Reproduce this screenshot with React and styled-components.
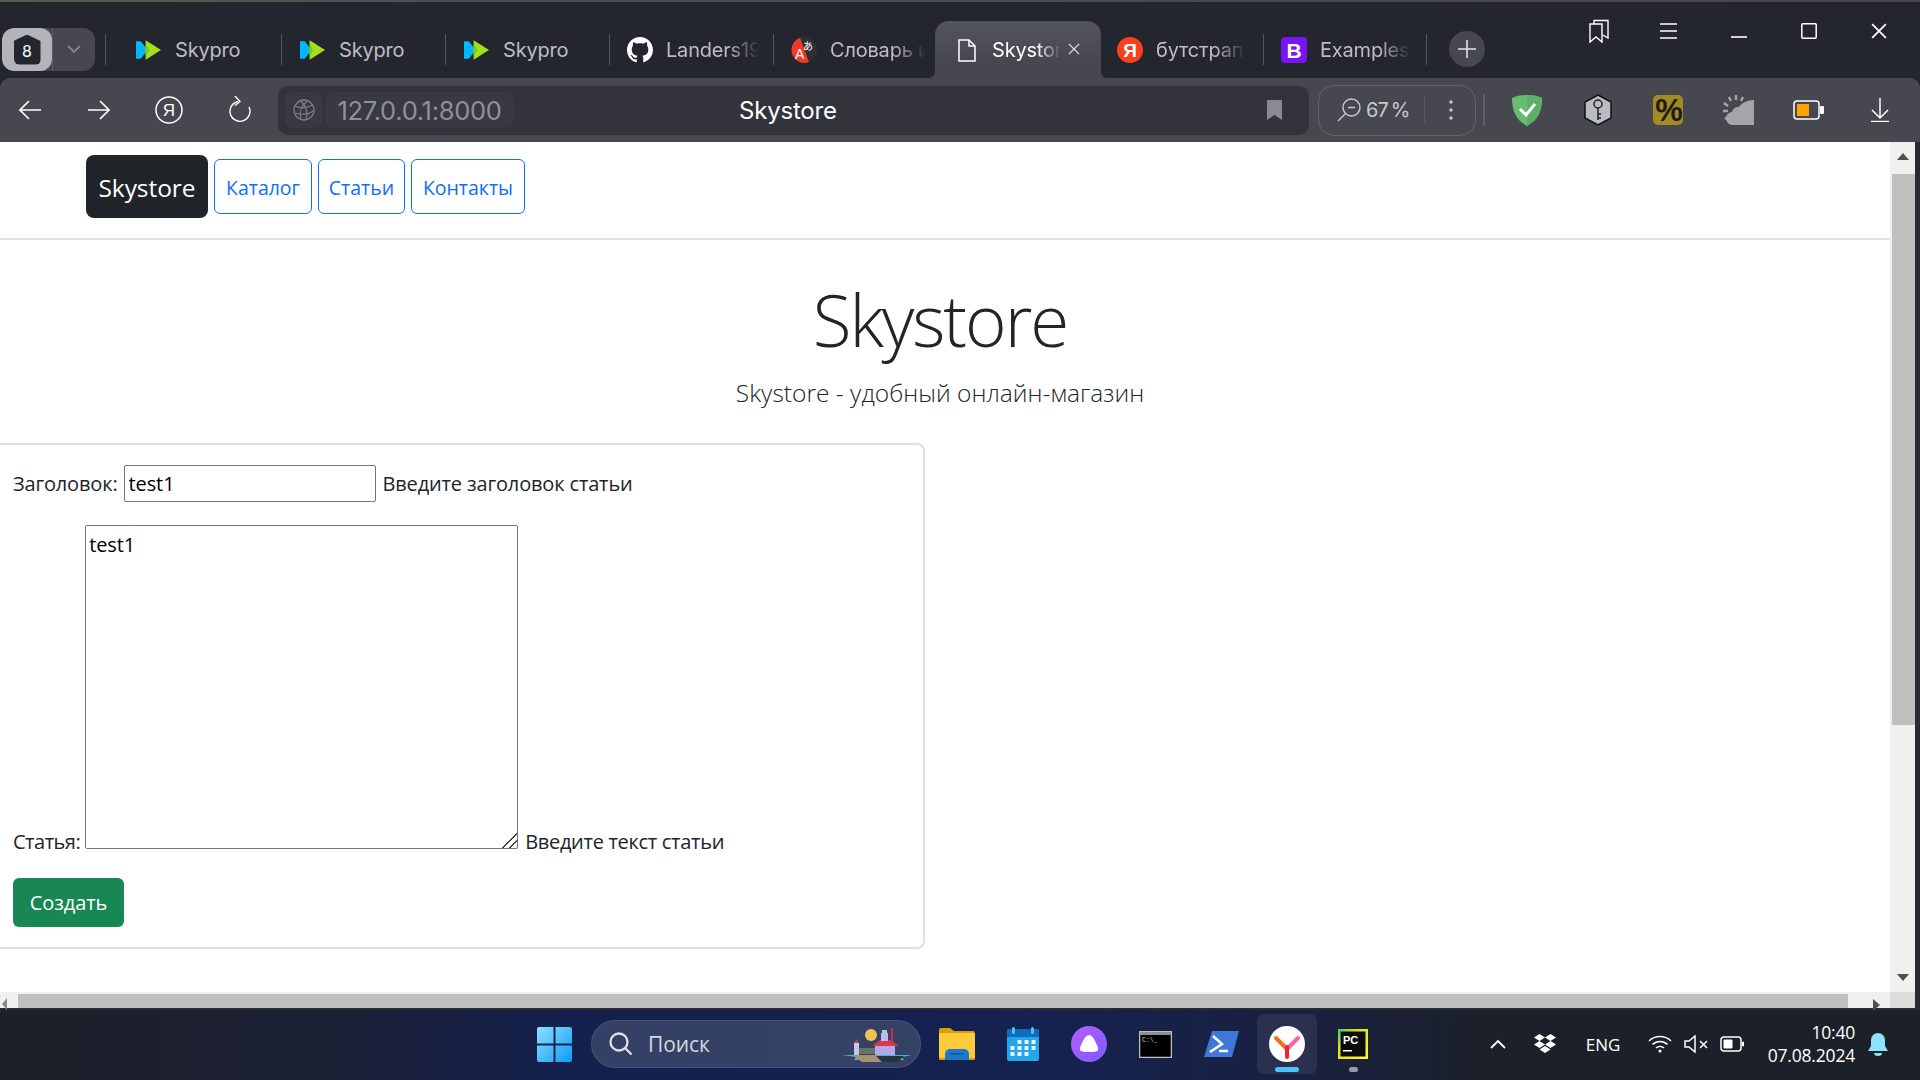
import React from 'react';
import styled, { createGlobalStyle } from 'styled-components';
import { BsGithub } from 'react-icons/bs';

const Global = createGlobalStyle`
  html, body { margin: 0; padding: 0; background: #24262f; overflow: hidden; }
  * { box-sizing: border-box; }
`;

const UI = `Inter, "Noto Sans", sans-serif`;
const PAGE = `"Open Sans", "Noto Sans", sans-serif`;

const Win = styled.div`
  width: 1920px; height: 1080px; display: flex; flex-direction: column; overflow: hidden;
  background: #24262f; font-family: ${UI};
`;
const TopStrip = styled.div`
  height: 2px; flex: none; background: linear-gradient(90deg, #565c52 0%, #4a4c4c 30%, #454549 100%);
`;
const TabBar = styled.div`
  height: 76px; flex: none; display: flex; align-items: flex-end; background: #24262f; padding-left: 2px;
`;
const Switcher = styled.div`
  width: 93px; height: 43px; margin-bottom: 7px; flex: none; display: flex; border-radius: 12px; background: #474750; overflow: hidden;
`;
const SwitchCount = styled.div`
  width: 50px; background: #b4b4b8; border-radius: 12px; display: flex; align-items: center; justify-content: center; color: #fff;
  font-size: 16px;
`;
const CountShape = styled.div`
  width: 27px; height: 30px; background: #24262f; border-radius: 3px 3px 6px 6px; display: flex; align-items: center; justify-content: center;
  clip-path: polygon(50% 0, 100% 22%, 100% 100%, 0 100%, 0 22%); padding-top: 2px;
`;
const SwitchArrow = styled.div`
  flex: 1; display: flex; align-items: center; justify-content: center; border-left: 1px solid #5d5d66;
`;
const Sep = styled.div`
  width: 1px; height: 31px; background: #55565e; flex: none; margin-bottom: 13px;
`;
const Spacer = styled.div`
  width: ${p => p.$w}px; flex: none;
`;
const Tab = styled.div`
  position: relative; width: ${p => p.$w}px; flex: none; display: flex; align-items: center; gap: ${p => p.$gap || 13}px;
  padding-left: ${p => p.$pad}px; padding-right: ${p => p.$pr || 22}px; height: 57px; padding-top: 1px;
  font-size: 20px; color: #bdbdc2;
  ${p => p.$sep && `
    &::after { content: ''; position: absolute; right: 0; top: 13px; height: 31px; width: 1px; background: #55565e; }
  `}
  ${p => p.$active && `
    color: #fff;
    background: linear-gradient(180deg, #54545e 0%, #474750 70%);
    border-radius: 14px 14px 0 0;
    &::before { content: ''; position: absolute; left: -7px; bottom: 0; width: 7px; height: 7px;
      background: radial-gradient(circle at 0 0, transparent 7px, #474750 7.5px); }
    &::after { content: ''; position: absolute; right: -7px; bottom: 0; width: 7px; height: 7px;
      background: radial-gradient(circle at 100% 0, transparent 7px, #474750 7.5px); }
  `}
`;
const TabIcon = styled.div`
  width: 26px; height: 26px; flex: none; display: flex; align-items: center; justify-content: center;
`;
const TabText = styled.div`
  flex: 1; min-width: 0; overflow: hidden; white-space: nowrap; letter-spacing: -0.2px;
  ${p => p.$fade && `-webkit-mask-image: linear-gradient(90deg, #000 65%, transparent 100%); mask-image: linear-gradient(90deg, #000 65%, transparent 100%);`}
`;
const TabClose = styled.div`
  position: absolute; right: 21px; top: 22px; width: 12px; height: 12px; display: flex;
`;
const PlusBtn = styled.div`
  width: 36px; height: 36px; margin-left: 22px; margin-bottom: 11px; flex: none; border-radius: 18px; background: #474750;
  display: flex; align-items: center; justify-content: center;
`;
const WinControls = styled.div`
  margin-left: auto; margin-right: 6px; height: 58px; align-self: flex-start; display: flex;
`;
const WinBtn = styled.div`
  width: 70px; display: flex; align-items: center; justify-content: center;
`;

const ToolBar = styled.div`
  height: 64px; flex: none; display: flex; align-items: center; background: #474750; border-radius: 10px 10px 0 0;
`;
const ToolSlot = styled.div`
  width: ${p => p.$w || 70}px; margin-right: ${p => p.$mr || 0}px; flex: none; display: flex; align-items: center; justify-content: center;
`;
const Address = styled.div`
  width: 1031px; height: 49px; margin-left: 4px; flex: none; background: #32333b; border-radius: 10px; display: flex; align-items: center;
  padding: 0 27px 0 7px; gap: 3px;
`;
const GlobeBox = styled.div`
  width: 37px; height: 36px; background: #383941; border-radius: 8px; display: flex; align-items: center; justify-content: center;
`;
const UrlBox = styled.div`
  width: 189px; height: 36px; background: #383941; border-radius: 8px; display: flex; align-items: center; justify-content: center;
  color: #90909a; font-size: 25.5px; letter-spacing: -0.3px; white-space: nowrap;
`;
const PageTitle = styled.div`
  margin-left: 222px; color: #fff; font-size: 24px; letter-spacing: -0.2px;
`;
const BookmarkSlot = styled.div`
  margin-left: auto; display: flex;
`;
const ZoomPill = styled.div`
  width: 158px; height: 51px; margin-left: 9px; flex: none; border: 1px solid #63636c; border-radius: 16px; display: flex; align-items: center;
  padding-left: 18px; color: #c9c9ce; font-size: 20px; position: relative;
`;
const ZoomValue = styled.span`
  margin-left: 5px; flex: none; letter-spacing: -0.9px; word-spacing: -2px; white-space: nowrap;
`;
const ZoomDivider = styled.div`
  width: 1px; height: 28px; background: #55565e; margin-left: 15px;
`;
const ZoomMore = styled.div`
  margin-left: 24px; display: flex;
`;
const ToolSep = styled.div`
  width: 2px; height: 32px; background: #60606a; margin-left: 7px; margin-right: 6px; flex: none;
`;

const PageFrame = styled.div`
  height: 868px; flex: none; background: #2a2b30; padding: 0 5px 2px 0; display: grid;
  grid-template-columns: 1fr 25px; grid-template-rows: 850px 16px;
`;
const Viewport = styled.div`
  background: #fff; overflow: hidden; font-family: ${PAGE}; color: #212529;
`;
const Nav = styled.nav`
  height: 98px; border-bottom: 2px solid #dee2e6; display: flex; align-items: center; padding: 0 0 7px 86px; gap: 6px;
`;
const Brand = styled.div`
  width: 122px; height: 63px; padding-top: 1px; background: #212529; color: #fff; border-radius: 8px; display: flex; align-items: center; justify-content: center;
  font-size: 24.5px; letter-spacing: -0.05px;
`;
const NavLink = styled.a`
  width: ${p => p.$w}px; height: 55px; padding-top: 1px; border: 1px solid #0d6efd; border-radius: 6px; color: #0d6efd; display: flex; align-items: center; justify-content: center;
  font-size: 19.5px; letter-spacing: -0.02px;
`;
const Hero = styled.header`
  width: 1880px; text-align: center; height: 203px; padding-top: 32px;
`;
const H1 = styled.h1`
  margin: 0; font-size: 71px; line-height: 96px; font-weight: 300; letter-spacing: -2.05px;
`;
const Lead = styled.p`
  margin: 8px 0 0; font-size: 24.5px; line-height: 34px; font-weight: 300; letter-spacing: 0.02px;
`;
const Card = styled.form`
  width: 933px; height: 506px; margin-left: -8px; border: 2px solid #e0e0e0; border-radius: 8px; padding: 20px 12px 0 19px;
  display: flex; flex-direction: column; font-size: 20px; letter-spacing: -0.15px;
`;
const FieldRow = styled.div`
  display: flex; align-items: ${p => p.$end ? 'flex-end' : 'center'}; margin-bottom: ${p => p.$mb}px; white-space: nowrap;
`;
const Label = styled.label`
  margin-right: ${p => p.$end ? 5 : 6}px; ${p => p.$end && 'line-height: 20px; margin-bottom: -3px; letter-spacing: -0.5px;'}
`;
const Hint = styled.span`
  margin-left: 7px; ${p => p.$end && 'line-height: 20px; margin-bottom: -3px; letter-spacing: -0.3px;'}
`;
const TextInput = styled.input`
  width: 252px; height: 37px; border: 1px solid #767676; border-radius: 2px; padding: 0 4px; font: inherit; letter-spacing: -0.1px; color: #000; outline: none;
`;
const TextArea = styled.textarea`
  display: block; width: 433px; height: 324px; border: 1px solid #767676; border-radius: 2px; padding: 5px 3px; font: inherit; letter-spacing: -0.1px; color: #000; outline: none;
  &::-webkit-resizer {
    background:
      linear-gradient(135deg, transparent 48%, #444 48%, #444 56%, transparent 56%, transparent 72%, #444 72%, #444 80%, transparent 80%);
  }
`;
const Submit = styled.button`
  width: 111px; height: 49px; background: #198754; color: #fff; border: none; border-radius: 6px; font: inherit; letter-spacing: -0.1px; padding: 0;
`;

const VScroll = styled.div`
  background: #f0f0f0; display: flex; flex-direction: column; padding-left: 2px; align-items: stretch;
`;
const VBtn = styled.div`
  height: ${p => p.$h}px; flex: none; display: flex; justify-content: center; padding-top: ${p => p.$pt}px; margin-left: -2px;
`;
const TriUp = styled.div`
  width: 0; height: 0; border-left: 6.5px solid transparent; border-right: 6.5px solid transparent; border-bottom: 7px solid #505050;
`;
const TriDown = styled.div`
  width: 0; height: 0; border-left: 6.5px solid transparent; border-right: 6.5px solid transparent; border-top: 7px solid #505050;
`;
const VThumb = styled.div`
  height: 551px; background: #c0c0c0; flex: none;
`;
const VFill = styled.div`
  flex: 1;
`;
const HScroll = styled.div`
  background: #f0f0f0; display: flex; padding-top: 2px;
`;
const HBtn = styled.div`
  width: ${p => p.$w}px; flex: none; display: flex; justify-content: ${p => p.$right ? 'flex-end' : 'flex-start'}; align-items: flex-end; padding: 0 ${p => p.$right ? 10 : 0}px 0 ${p => p.$right ? 0 : 2}px;
`;
const TriLeft = styled.div`
  width: 0; height: 0; border-top: 6px solid transparent; border-bottom: 6px solid transparent; border-right: 5px solid #8a8a8a; margin-bottom: -2px;
`;
const TriRight = styled.div`
  width: 0; height: 0; border-top: 6px solid transparent; border-bottom: 6px solid transparent; border-left: 7px solid #505050; margin-bottom: -3px;
`;
const HThumb = styled.div`
  width: 1830px; flex: none; background: #c0c0c0;
`;
const Corner = styled.div`
  background: #dcdcdc;
`;

const TaskBar = styled.div`
  height: 70px; flex: none; display: flex; align-items: center; padding: 0 0 2px 521px; color: #fff;
  background: linear-gradient(90deg, #1d2028 0%, #1b2036 18%, #14214f 30%, #15224f 55%, #1a2140 68%, #1c2029 78%, #1c2028 100%);
  font-family: ${PAGE};
`;
const AppSlot = styled.div`
  position: relative; width: 66px; height: 68px; flex: none; display: flex; align-items: center; justify-content: center;
  ${p => p.$mr && `margin-right: ${p.$mr}px;`}
`;
const HoverBox = styled.div`
  width: 60px; height: 60px; background: rgba(255,255,255,0.07); border-radius: 7px; display: flex; align-items: center; justify-content: center;
`;
const Indicator = styled.div`
  position: absolute; left: 50%; bottom: 6px; width: ${p => p.$w}px; height: 5px; margin-left: ${p => -p.$w / 2}px; border-radius: 3px; background: ${p => p.$c};
`;
const SearchPill = styled.div`
  width: 330px; height: 48px; flex: none; margin-right: 3px; border-radius: 24px; background: rgba(255,255,255,0.14); border: 1px solid rgba(255,255,255,0.1);
  display: flex; align-items: center; padding-left: 17px; font-size: 21px; color: #d5d7de; position: relative;
`;
const SearchLabel = styled.span`
  margin-left: 15px; letter-spacing: -0.1px;
`;
const Lighthouse = styled.div`
  margin-left: auto; margin-right: 8px; padding-top: 4px; display: flex;
`;
const Tray = styled.div`
  margin-left: auto; display: flex; align-items: center; padding-right: 19px; height: 68px;
`;
const TraySlot = styled.div`
  width: ${p => p.$w}px; flex: none; display: flex; align-items: center; justify-content: center; font-size: 17px;
`;
const Clock = styled.div`
  width: 100px; flex: none; text-align: right; font-size: 17.5px; line-height: 23px; letter-spacing: -0.2px; white-space: nowrap;
`;

/* ---------- icons ---------- */
const Skypro = () => (
  <svg width="27" height="20" viewBox="0 0 27 20">
    <path d="M0 1h5l7 9-7 9H0z" fill="#00b8ff" />
    <path d="M10 0l16 10-16 10z" fill="#a4e01a" />
    <path d="M10 4l4 6-4 6z" fill="#7ec81a" />
  </svg>
);
const Translate = () => (
  <svg width="26" height="26" viewBox="0 0 26 26">
    <circle cx="13" cy="13" r="13" fill="#2e2e33" />
    <path d="M9 .8A13 13 0 0 0 9 25.2 13 13 0 0 0 18 25L9 .8z" fill="#f1392a" />
    <text x="4" y="22" fontSize="14" fontFamily="Liberation Sans" fill="#fff">A</text>
    <text x="12" y="13" fontSize="10" fontFamily="Noto Sans CJK JP" fill="#fff">あ</text>
  </svg>
);
const Doc = () => (
  <svg width="18" height="23" viewBox="0 0 18 23" fill="none" stroke="#fff" strokeWidth="1.5">
    <path d="M1 1h10l6 6v15H1z" /><path d="M11 1v6h6" />
  </svg>
);
const YaTab = () => (
  <svg width="26" height="26" viewBox="0 0 26 26">
    <circle cx="13" cy="13" r="13" fill="#fc3f1d" />
    <text x="13" y="20" textAnchor="middle" fontSize="19" fontWeight="700" fontFamily="Liberation Sans" fill="#fff">Я</text>
  </svg>
);
const BootstrapIcon = () => (
  <svg width="26" height="26" viewBox="0 0 26 26">
    <rect width="26" height="26" rx="4" fill="#7a12f5" />
    <text x="13" y="20.5" textAnchor="middle" fontSize="21" fontWeight="700" fontFamily="Liberation Sans" fill="#fff">B</text>
  </svg>
);
const Cross = ({ s = 14, c = '#e6e6e8', w = 1.4 }) => (
  <svg width={s} height={s} viewBox="0 0 14 14" stroke={c} strokeWidth={w} fill="none"><path d="M1 1l12 12M13 1L1 13" /></svg>
);
const Chevron = () => (
  <svg width="14" height="9" viewBox="0 0 14 9" fill="none" stroke="#85858e" strokeWidth="1.8"><path d="M1 1l6 6 6-6" /></svg>
);
const Plus = () => (
  <svg width="18" height="18" viewBox="0 0 18 18" stroke="#e3e3e6" strokeWidth="1.6"><path d="M9 0v18M0 9h18" /></svg>
);
const Bookmarks = () => (
  <svg width="20" height="24" viewBox="0 0 20 24" fill="none" stroke="#fff" strokeWidth="1.4">
    <path d="M1 5h12v18l-6-5-6 5z" /><path d="M5 5V1.500h14V19l-5-3" />
  </svg>
);
const Burger = () => (
  <svg width="18" height="16" viewBox="0 0 18 16" stroke="#fff" strokeWidth="1.5"><path d="M0 1h17M0 8h17M0 15h17" /></svg>
);
const Minimize = () => (
  <svg width="16" height="16" viewBox="0 0 16 16" stroke="#fff" strokeWidth="1.6"><path d="M0 14h16" /></svg>
);
const Maximize = () => (
  <svg width="16" height="16" viewBox="0 0 16 16" stroke="#fff" strokeWidth="1.5" fill="none"><rect x=".8" y=".8" width="14.4" height="14.4" rx="1" /></svg>
);
const Back = () => (
  <svg width="22" height="20" viewBox="0 0 22 20" fill="none" stroke="#fff" strokeWidth="1.6"><path d="M22 10H1M10 1l-9 9 9 9" /></svg>
);
const Forward = () => (
  <svg width="22" height="20" viewBox="0 0 22 20" fill="none" stroke="#fff" strokeWidth="1.6"><path d="M0 10h21M12 1l9 9-9 9" /></svg>
);
const YaCircle = () => (
  <svg width="28" height="28" viewBox="0 0 28 28">
    <circle cx="14" cy="14" r="13" fill="none" stroke="#fff" strokeWidth="1.5" />
    <text x="14" y="20" textAnchor="middle" fontSize="17" fontFamily="Liberation Sans" fill="#fff">Я</text>
  </svg>
);
const Reload = () => (
  <svg width="24" height="28" viewBox="0 0 24 28" fill="none" stroke="#fff" strokeWidth="1.4">
    <path d="M11 5.500a10 10 0 1 0 11 5.500" /><path d="M8 0l5 5.500-5 4" />
  </svg>
);
const Globe = () => (
  <svg width="22" height="22" viewBox="0 0 22 22" fill="none" stroke="#7c7c85" strokeWidth="1.3">
    <circle cx="11" cy="11" r="10" /><path d="M2 7c6 3 12 2 18-1M2 14c6 2 13 2 18-2M14 2C8 7 6 14 8 20M8 2c5 5 7 12 5 19" />
  </svg>
);
const BookmarkFlag = () => (
  <svg width="15" height="20" viewBox="0 0 15 20"><path d="M0 1a1 1 0 0 1 1-1h13a1 1 0 0 1 1 1v19l-7.500-5L0 20z" fill="#8a8a92" /></svg>
);
const ZoomOut = () => (
  <svg width="24" height="24" viewBox="0 0 24 24" fill="none" stroke="#c9c9ce" strokeWidth="1.4">
    <circle cx="14.500" cy="9.500" r="8.500" /><path d="M8 16l-7 7M11 9.500h7" />
  </svg>
);
const Dots = () => (
  <svg width="4" height="20" viewBox="0 0 4 20" fill="#c9c9ce"><circle cx="2" cy="2" r="1.700" /><circle cx="2" cy="10" r="1.700" /><circle cx="2" cy="18" r="1.700" /></svg>
);
const Shield = () => (
  <svg width="30" height="31" viewBox="0 0 30 31">
    <path d="M15 0C9 0 4 1 0 3c0 13 4 22 15 28C26 25 30 16 30 3c-4-2-9-3-15-3z" fill="#68bc71" />
    <path d="M15 0c6 0 11 1 15 3 0 13-4 22-15 28z" fill="#5caf68" />
    <path d="M8 14l6 6 9-11" fill="none" stroke="#fff" strokeWidth="3" />
  </svg>
);
const KeyHex = () => (
  <svg width="28" height="32" viewBox="0 0 28 32">
    <path d="M14 1l13 7v16l-13 7-13-7V8z" fill="#b9bcc2" stroke="#111" strokeWidth="1.500" />
    <circle cx="14" cy="10" r="4" fill="none" stroke="#222" strokeWidth="1.500" />
    <path d="M14 14v12M14 20h3M14 24h3" stroke="#222" strokeWidth="1.500" />
  </svg>
);
const Percent = () => (
  <svg width="30" height="30" viewBox="0 0 30 30">
    <rect width="30" height="30" rx="5" fill="#a48a22" />
    <text x="16" y="26" textAnchor="middle" fontSize="31" fontWeight="700" fontFamily="Liberation Sans" fill="#1d1d1f">%</text>
  </svg>
);
const Weather = () => (
  <svg width="31" height="30" viewBox="0 0 31 30">
    <g stroke="#a5a5a8" strokeWidth="2.500"><path d="M13 0v5M6 2l2 4M20 2l-2 4M1 8l4 3M0 16h5M2 24l4-3" /></g>
    <path d="M9 17a6 6 0 0 1 7-5c2-4 9-7 15-7v25H10a6.500 6.500 0 0 1-1-13z" fill="#a5a5a8" />
  </svg>
);
const BatteryBar = () => (
  <svg width="31" height="20" viewBox="0 0 31 20">
    <rect x="1" y="1" width="25" height="18" rx="3" fill="none" stroke="#fff" strokeWidth="1.500" />
    <rect x="4" y="4" width="12" height="12" fill="#ffa200" />
    <rect x="27" y="6" width="4" height="8" rx="1" fill="#fff" />
  </svg>
);
const Download = () => (
  <svg width="20" height="24" viewBox="0 0 20 24" fill="none" stroke="#fff" strokeWidth="1.500"><path d="M10 0v19M2 12l8 8 8-8M1 23.500h18" /></svg>
);
const WinLogo = () => (
  <svg width="35" height="35" viewBox="0 0 35 35">
    <defs>
      <linearGradient id="w" x1="0" y1="0" x2="1" y2="1"><stop offset="0" stopColor="#8be0ff" /><stop offset="1" stopColor="#0f9bf5" /></linearGradient>
    </defs>
    <path d="M2 0h14.500v16.500H0V2a2 2 0 0 1 2-2zM18.500 0H33a2 2 0 0 1 2 2v14.500H18.500zM0 18.500h16.500V35H2a2 2 0 0 1-2-2zM18.500 18.500H35V33a2 2 0 0 1-2 2H18.500z" fill="url(#w)" />
  </svg>
);
const SearchIcon = () => (
  <svg width="24" height="24" viewBox="0 0 24 24" fill="none" stroke="#e0e1e6" strokeWidth="2.300"><circle cx="10" cy="10" r="8.500" /><path d="M16 16l6.500 6.500" /></svg>
);
const LighthouseArt = () => (
  <svg width="70" height="36" viewBox="0 0 70 36">
    <circle cx="29" cy="7" r="6" fill="#f1c257" />
    <path d="M0 27h70l-10 2 2 3H12l2-3z" fill="#3fb6d4" />
    <path d="M10 27h24l8 7H20z" fill="#a79170" />
    <path d="M34 28h28l-6 6H40z" fill="#27343f" />
    <rect x="12" y="15" width="5" height="12" fill="#c7c3e8" />
    <path d="M12 15l2.500-4 2.500 4z" fill="#c9424c" />
    <rect x="17" y="20" width="18" height="6" fill="#6c7167" />
    <rect x="33" y="18" width="20" height="9" fill="#b9a6e4" />
    <path d="M30 18l8-6h10l9 6z" fill="#d23a4d" />
    <rect x="39" y="5" width="7" height="8" fill="#c5b4ee" />
    <rect x="40" y="2" width="5" height="3" fill="#9fd9b0" />
    <rect x="49" y="0" width="2" height="14" fill="#c9303f" />
  </svg>
);
const Folder = () => (
  <svg width="36" height="32" viewBox="0 0 36 32">
    <path d="M0 2a2 2 0 0 1 2-2h9l4 3h19a2 2 0 0 1 2 2v4H0z" fill="#d9a000" />
    <path d="M0 5h34a2 2 0 0 1 2 2v23a2 2 0 0 1-2 2H2a2 2 0 0 1-2-2z" fill="#fdca3c" />
    <path d="M6 32v-6a5 5 0 0 1 5-5h14a5 5 0 0 1 5 5v6z" fill="#1d78c9" />
    <rect x="11" y="25" width="14" height="1.500" fill="#0f5a9f" />
    <path d="M0 30h6v2H2a2 2 0 0 1-2-2zM30 32v-2h6a2 2 0 0 1-2 2z" fill="#d9a000" />
  </svg>
);
const Calendar = () => (
  <svg width="32" height="34" viewBox="0 0 32 34">
    <rect y="2" width="32" height="32" rx="2" fill="#23a6ee" />
    <path d="M0 4a2 2 0 0 1 2-2h28a2 2 0 0 1 2 2v6H0z" fill="#0f6cbd" />
    <rect x="5" y="0" width="3" height="7" rx="1.500" fill="#4fc4f7" />
    <rect x="24" y="0" width="3" height="7" rx="1.500" fill="#4fc4f7" />
    <g fill="#e8f6fe">
      <rect x="10.500" y="13" width="4" height="4" rx=".5" /><rect x="17.500" y="13" width="4" height="4" rx=".5" /><rect x="24.500" y="13" width="4" height="4" rx=".5" />
      <rect x="3.500" y="19" width="4" height="4" rx=".5" /><rect x="10.500" y="19" width="4" height="4" rx=".5" /><rect x="17.500" y="19" width="4" height="4" rx=".5" /><rect x="24.500" y="19" width="4" height="4" rx=".5" />
      <rect x="3.500" y="25" width="4" height="4" rx=".5" /><rect x="10.500" y="25" width="4" height="4" rx=".5" /><rect x="17.500" y="25" width="4" height="4" rx=".5" />
    </g>
  </svg>
);
const Alice = () => (
  <svg width="36" height="36" viewBox="0 0 36 36">
    <defs><linearGradient id="a" x1="0" y1="0" x2="1" y2="1"><stop offset="0" stopColor="#b85cff" /><stop offset="1" stopColor="#7a5cff" /></linearGradient></defs>
    <circle cx="18" cy="18" r="18" fill="url(#a)" />
    <path d="M18 9c3 0 5 4 7 8s3 7 1 8-5 1-8 1-6 0-8-1-1-4 1-8 4-8 7-8z" fill="#fff" />
  </svg>
);
const Cmd = () => (
  <svg width="33" height="27" viewBox="0 0 33 27">
    <rect width="33" height="27" fill="#b9b9b9" />
    <rect x="1" y="1" width="31" height="25" fill="#000" stroke="#c9c9c9" strokeWidth=".5" />
    <rect x="1" y="1" width="31" height="3" fill="#8e8e8e" />
    <text x="3" y="11" fontSize="6.500" fontFamily="Liberation Mono" fill="#d0d0d0">C:\_</text>
  </svg>
);
const PowerShell = () => (
  <svg width="35" height="26" viewBox="0 0 35 26">
    <path d="M8 0h27l-7 26H0z" fill="#3f78d8" />
    <path d="M9 5l9 8-12 8" fill="none" stroke="#fff" strokeWidth="2.500" />
    <path d="M15 20h9" stroke="#fff" strokeWidth="2.500" />
  </svg>
);
const YaBrowser = () => (
  <svg width="36" height="36" viewBox="0 0 36 36">
    <circle cx="18" cy="18" r="18" fill="#fff" />
    <path d="M7 12l11 11" stroke="#ff6a1a" strokeWidth="4" strokeLinecap="round" />
    <path d="M29 12L18 23" stroke="#ff5fa8" strokeWidth="4" strokeLinecap="round" />
    <path d="M18 21v10" stroke="#f5222d" strokeWidth="4" strokeLinecap="round" />
  </svg>
);
const PyCharm = () => (
  <svg width="30" height="30" viewBox="0 0 30 30">
    <defs><linearGradient id="p" x1="0" y1="0" x2="1" y2="1"><stop offset="0" stopColor="#21d789" /><stop offset=".3" stopColor="#d6e11c" /><stop offset="1" stopColor="#fcf84a" /></linearGradient></defs>
    <rect width="30" height="30" fill="url(#p)" />
    <rect x="2.500" y="2.500" width="25" height="25" fill="#0b0b0b" />
    <text x="5" y="15" fontSize="11" fontWeight="700" fontFamily="Liberation Sans" fill="#fff">PC</text>
    <rect x="5" y="21" width="9" height="1.500" fill="#fff" />
  </svg>
);
const Caret = () => (
  <svg width="16" height="10" viewBox="0 0 16 10" fill="none" stroke="#fff" strokeWidth="1.800"><path d="M1 9l7-7 7 7" /></svg>
);
const Dropbox = () => (
  <svg width="22" height="20" viewBox="0 0 22 20" fill="#fff">
    <path d="M5.500 0L0 3.500 5.500 7 11 3.500zM16.500 0L11 3.500 16.500 7 22 3.500zM0 10.500L5.500 14 11 10.500 5.500 7zM16.500 7L11 10.500l5.500 3.500 5.500-3.500zM5.500 15.500L11 19l5.500-3.500L11 12z" />
  </svg>
);
const Wifi = () => (
  <svg width="24" height="18" viewBox="0 0 24 18" fill="none" stroke="#fff" strokeWidth="1.500">
    <path d="M1 6a16 16 0 0 1 22 0M4.500 9.500a11 11 0 0 1 15 0M8 13a6 6 0 0 1 8 0" /><circle cx="12" cy="16" r="1.500" fill="#fff" stroke="none" />
  </svg>
);
const Mute = () => (
  <svg width="24" height="18" viewBox="0 0 24 18" fill="none" stroke="#fff" strokeWidth="1.500">
    <path d="M1 6h4l6-5v16l-6-5H1z" /><path d="M16 6l7 7M23 6l-7 7" />
  </svg>
);
const TrayBattery = () => (
  <svg width="24" height="16" viewBox="0 0 24 16">
    <rect x="1" y="1" width="20" height="14" rx="3" fill="none" stroke="#fff" strokeWidth="1.500" />
    <rect x="3.500" y="3.500" width="9" height="9" rx="1" fill="#fff" />
    <rect x="22" y="5.500" width="2" height="5" rx="1" fill="#fff" />
  </svg>
);
const Bell = () => (
  <svg width="20" height="23" viewBox="0 0 20 23" fill="#8ce3fb">
    <path d="M10 0a7 7 0 0 1 7 7v6l3 5H0l3-5V7a7 7 0 0 1 7-7z" /><path d="M6 20h8a4 3 0 0 1-8 0z" />
  </svg>
);

const tabs = [
  { key: 1, w: 164, pad: 18, title: 'Skypro', icon: <Skypro />, sep: true },
  { key: 2, w: 164, pad: 18, title: 'Skypro', icon: <Skypro />, sep: true },
  { key: 3, w: 164, pad: 18, title: 'Skypro', icon: <Skypro />, sep: true },
  { key: 4, w: 164, pad: 17, pr: 14, title: 'Landers19', icon: <BsGithub size={26} color="#fff" />, sep: true, fade: true },
  { key: 5, w: 161, pad: 17, pr: 9, title: 'Словарь и', icon: <Translate />, fade: true },
  { key: 6, w: 166, pad: 19, gap: 12, pr: 40, title: 'Skystore', icon: <Doc />, active: true, fade: true },
  { key: 7, w: 163, pad: 16, pr: 18, title: 'бутстрап', icon: <YaTab />, sep: true, fade: true },
  { key: 8, w: 163, pad: 17, pr: 16, title: 'Examples', icon: <BootstrapIcon />, sep: true, fade: true },
];

export default function App() {
  return (
    <Win>
      <Global />
      <TopStrip />
      <TabBar>
        <Switcher>
          <SwitchCount><CountShape>8</CountShape></SwitchCount>
          <SwitchArrow><Chevron /></SwitchArrow>
        </Switcher>
        <Spacer $w={10} />
        <Sep />
        <Spacer $w={12} />
        {tabs.map(t => (
          <Tab key={t.key} $w={t.w} $pad={t.pad} $gap={t.gap} $pr={t.pr} $sep={t.sep} $active={t.active}>
            <TabIcon>{t.icon}</TabIcon>
            <TabText $fade={t.fade}>{t.title}</TabText>
            {t.active && <TabClose><Cross s={12} /></TabClose>}
          </Tab>
        ))}
        <PlusBtn><Plus /></PlusBtn>
        <WinControls>
          <WinBtn><Bookmarks /></WinBtn>
          <WinBtn><Burger /></WinBtn>
          <WinBtn><Minimize /></WinBtn>
          <WinBtn><Maximize /></WinBtn>
          <WinBtn><Cross s={16} c="#fff" w={1.5} /></WinBtn>
        </WinControls>
      </TabBar>
      <ToolBar>
        <ToolSlot $w={60} $mr={4}><Back /></ToolSlot>
        <ToolSlot><Forward /></ToolSlot>
        <ToolSlot><YaCircle /></ToolSlot>
        <ToolSlot><Reload /></ToolSlot>
        <Address>
          <GlobeBox><Globe /></GlobeBox>
          <UrlBox>127.0.0.1:8000</UrlBox>
          <PageTitle>Skystore</PageTitle>
          <BookmarkSlot><BookmarkFlag /></BookmarkSlot>
        </Address>
        <ZoomPill>
          <ZoomOut />
          <ZoomValue>67 %</ZoomValue>
          <ZoomDivider />
          <ZoomMore><Dots /></ZoomMore>
        </ZoomPill>
        <ToolSep />
        <ToolSlot $w={71}><Shield /></ToolSlot>
        <ToolSlot $w={71}><KeyHex /></ToolSlot>
        <ToolSlot $w={70}><Percent /></ToolSlot>
        <ToolSlot $w={70}><Weather /></ToolSlot>
        <ToolSlot $w={71}><BatteryBar /></ToolSlot>
        <ToolSlot $w={72}><Download /></ToolSlot>
      </ToolBar>
      <PageFrame>
        <Viewport>
          <Nav>
            <Brand>Skystore</Brand>
            <NavLink $w={98}>Каталог</NavLink>
            <NavLink $w={87}>Статьи</NavLink>
            <NavLink $w={114}>Контакты</NavLink>
          </Nav>
          <Hero>
            <H1>Skystore</H1>
            <Lead>Skystore - удобный онлайн-магазин</Lead>
          </Hero>
          <Card>
            <FieldRow $mb={23}>
              <Label>Заголовок:</Label>
              <TextInput defaultValue="test1" />
              <Hint>Введите заголовок статьи</Hint>
            </FieldRow>
            <FieldRow $end $mb={29}>
              <Label $end>Статья:</Label>
              <TextArea defaultValue="test1" />
              <Hint $end>Введите текст статьи</Hint>
            </FieldRow>
            <div><Submit type="button">Создать</Submit></div>
          </Card>
        </Viewport>
        <VScroll>
          <VBtn $h={32} $pt={11}><TriUp /></VBtn>
          <VThumb />
          <VFill />
          <VBtn $h={18} $pt={0}><TriDown /></VBtn>
        </VScroll>
        <HScroll>
          <HBtn $w={18}><TriLeft /></HBtn>
          <HThumb />
          <HBtn $w={42} $right><TriRight /></HBtn>
        </HScroll>
        <Corner />
      </PageFrame>
      <TaskBar>
        <AppSlot $mr={4}><WinLogo /></AppSlot>
        <SearchPill>
          <SearchIcon />
          <SearchLabel>Поиск</SearchLabel>
          <Lighthouse><LighthouseArt /></Lighthouse>
        </SearchPill>
        <AppSlot><Folder /></AppSlot>
        <AppSlot><Calendar /></AppSlot>
        <AppSlot><Alice /></AppSlot>
        <AppSlot><Cmd /></AppSlot>
        <AppSlot><PowerShell /></AppSlot>
        <AppSlot><HoverBox><YaBrowser /></HoverBox><Indicator $w={24} $c="#4cc2ff" /></AppSlot>
        <AppSlot><PyCharm /><Indicator $w={9} $c="#9a9ca3" /></AppSlot>
        <Tray>
          <TraySlot $w={46}><Caret /></TraySlot>
          <TraySlot $w={48}><Dropbox /></TraySlot>
          <TraySlot $w={68}>ENG</TraySlot>
          <TraySlot $w={46}><Wifi /></TraySlot>
          <TraySlot $w={26}><Mute /></TraySlot>
          <TraySlot $w={46}><TrayBattery /></TraySlot>
          <Clock>10:40<br />07.08.2024</Clock>
          <TraySlot $w={46}><Bell /></TraySlot>
        </Tray>
      </TaskBar>
    </Win>
  );
}
